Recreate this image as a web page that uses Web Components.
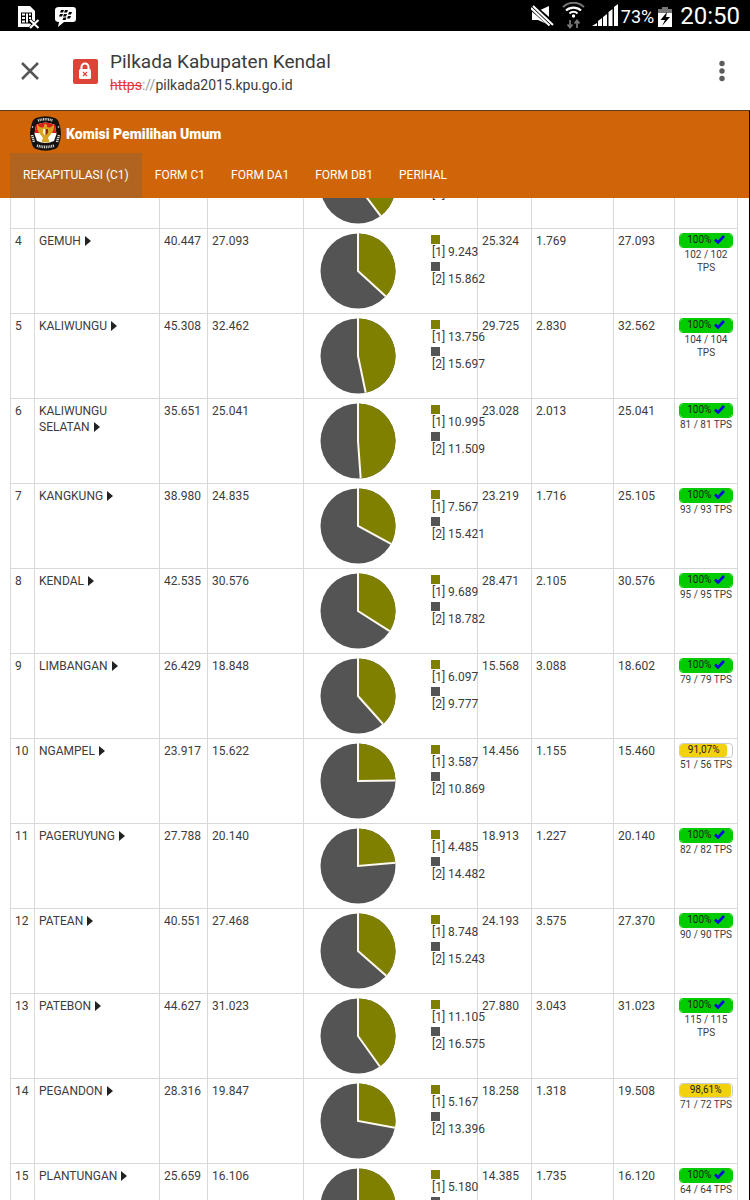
<!DOCTYPE html>
<html lang="id">
<head>
<meta charset="utf-8">
<meta name="viewport" content="width=device-width, initial-scale=1">
<title>Pilkada Kabupaten Kendal</title>
<style>
  html, body { height: 100%; margin: 0; }
  body { font-family: Roboto, "Liberation Sans", sans-serif; background: #fff; color: #3c3c3c; overflow: hidden; }
</style>
</head>
<body>
<phone-screen>
  <status-bar slot="status" battery="73%" time="20:50"></status-bar>
  <browser-bar slot="chrome" page-title="Pilkada Kabupaten Kendal" scheme="https" host="pilkada2015.kpu.go.id"></browser-bar>
  <site-header slot="header">
    <span slot="brand">Komisi Pemilihan Umum</span>
    <nav-tab active>REKAPITULASI (C1)</nav-tab>
    <nav-tab>FORM C1</nav-tab>
    <nav-tab>FORM DA1</nav-tab>
    <nav-tab>FORM DB1</nav-tab>
    <nav-tab>PERIHAL</nav-tab>
  </site-header>
  <recap-table></recap-table>
</phone-screen>

<script>
const attach = (el, html) => { el.attachShadow({ mode: 'open' }).innerHTML = html; };

customElements.define('phone-screen', class extends HTMLElement {
  constructor() {
    super();
    attach(this, `
      <style>
        :host { display: flex; flex-direction: column; height: 100vh; overflow: hidden; }
        .page { flex: 1; min-height: 0; display: flex; flex-direction: column; overflow: hidden;
                border-right: 1px solid #000; }
        .top { flex: none; }
        main { flex: 1; min-height: 0; overflow: hidden; }
      </style>
      <slot name="status"></slot>
      <slot name="chrome"></slot>
      <div class="page">
        <div class="top"><slot name="header"></slot></div>
        <main><slot></slot></main>
      </div>`);
  }
});

customElements.define('status-bar', class extends HTMLElement {
  constructor() {
    super();
    attach(this, `
      <style>
        :host { display: flex; align-items: center; height: 31px; padding: 2px 10px 0 16px; background: #000; color: #fff; box-sizing: border-box; flex: none; }
        svg { display: block; }
        .left { display: flex; gap: 15px; flex: 1; }
        .right { display: flex; align-items: center; }
        .pct { font-size: 18px; line-height: 29px; margin: 0 4px 0 3px; }
        .time { font-size: 24px; line-height: 29px; margin-left: 8px; }
      </style>
      <div class="left">
        <svg width="24" height="24" viewBox="0 0 24 24">
          <path d="M2 1h12l5 5v11l-3 5H2z" fill="#fff"/>
          <path d="M5 7.500h11v11H5z" fill="#000"/>
          <path d="M6 8.500h3v2H6zM6 12h3v2H6zM6 15.500h3v2H6zM10 8.500h2v9h-2zM13 8.500h2v2h-2zM13 12h2v2h-2z" fill="#fff"/>
          <path d="M14 15.500l8.500 8.500M22.500 15.500L14 24" stroke="#000" stroke-width="4.500"/>
          <path d="M14 15l8.500 8M22.500 15L14 23" stroke="#fff" stroke-width="2"/>
        </svg>
        <svg width="22" height="24" viewBox="0 0 22 24">
          <path d="M4 2h14q3 0 3 3v9q0 3-3 3H9l-6 5 1-5q-4 0-4-3V5q0-3 4-3z" fill="#fff"/>
          <path d="M6 5h3l-1 2.500H5zM10 5h3l-1 2.500H9zM5 9h3l-1 2.500H4zM9 9h3l-1 2.500H8zM14 7h3l-1 2.500h-3zM13 11h3l-1 2.500h-3zM8.500 12.500h3l-1 2.500h-3z" fill="#000"/>
        </svg>
      </div>
      <div class="right">
        <svg width="87" height="29" viewBox="0 2 87 29">
          <path d="M1 11h6L18 6v19L7 20H1z" fill="#fff"/>
          <path d="M0 6l23 20" stroke="#000" stroke-width="7"/>
          <path d="M0 8l18.500 17.500M2 6l20 19" stroke="#fff" stroke-width="2"/>
          <g fill="none" stroke-width="2">
            <path d="M32 7a15 15 0 0 1 21 0" stroke="#777"/>
            <path d="M35 10.500a11 11 0 0 1 15 0M38.500 13.500a6 6 0 0 1 8 0" stroke="#fff" stroke-width="2.200"/>
          </g>
          <circle cx="42.500" cy="16" r="1.700" fill="#fff"/>
          <path d="M39 20v7M36.500 24.500L39 27.500l2.500-3M46 28v-7M43.500 23.500L46 20.500l2.500 3" stroke="#777" stroke-width="1.800" fill="none"/>
          <path d="M61 26l5-3v3zM67 26v-5l4-3v8zM72 26v-9l4-3v12zM77.500 26V12l4-3v17zM83 26V7l4-3v22z" fill="#fff"/>
        </svg>
        <span class="pct"></span>
        <svg width="14" height="20" viewBox="0 0 14 20">
          <path d="M4 0h6v2h4v7H0V2h4z" fill="#777"/><path d="M0 6h14v14H0z" fill="#fff"/>
          <path d="M9 5L2.500 13H7l-3 6 8-9H8z" fill="#000"/>
        </svg>
        <span class="time"></span>
      </div>`);
    this.shadowRoot.querySelector('.pct').textContent = this.getAttribute('battery');
    this.shadowRoot.querySelector('.time').textContent = this.getAttribute('time');
  }
});

customElements.define('browser-bar', class extends HTMLElement {
  constructor() {
    super();
    attach(this, `
      <style>
        :host { display: flex; align-items: center; height: 80px; padding: 1px 16px 0 20px; box-sizing: border-box; background: #fff; border-bottom: 1px solid #5a3a1c; flex: none; }
        button { border: 0; padding: 0; background: none; display: block; }
        svg { display: block; }
        .lock { margin: 0 12px 0 33px; }
        .text { flex: 1; display: flex; flex-direction: column; padding-top: 3px; }
        .title { font-size: 19px; line-height: 24px; }
        .url { font-size: 14px; line-height: 22px; }
        s { color: #e53935; } i { font-style: normal; color: #999; }
      </style>
      <button aria-label="Tutup"><svg width="20" height="20" viewBox="0 0 20 20"><path d="M2 2l16 16M18 2L2 18" stroke="#555" stroke-width="2.500"/></svg></button>
      <svg class="lock" width="25" height="25" viewBox="0 0 25 25">
        <rect width="25" height="25" rx="2" fill="#db4437"/>
        <rect x="6" y="10" width="12" height="10" rx="1.500" fill="#fff"/>
        <path d="M8.500 11V8a3.500 3.500 0 0 1 7 0v3" fill="none" stroke="#fff" stroke-width="2"/>
        <path d="M10 13l4 4M14 13l-4 4" stroke="#db4437" stroke-width="1.200"/>
      </svg>
      <div class="text"><span class="title"></span><span class="url"><s></s><i>://</i><span class="host"></span></span></div>
      <button aria-label="Menu"><svg width="24" height="24" viewBox="0 0 24 24" fill="#5c5c5c"><circle cx="12" cy="4.500" r="2.700"/><circle cx="12" cy="12" r="2.700"/><circle cx="12" cy="19.500" r="2.700"/></svg></button>`);
    const $ = q => this.shadowRoot.querySelector(q);
    $('.title').textContent = this.getAttribute('page-title');
    $('s').textContent = this.getAttribute('scheme');
    $('.host').textContent = this.getAttribute('host');
  }
});

customElements.define('site-header', class extends HTMLElement {
  constructor() {
    super();
    attach(this, `
      <style>
        :host { display: block; background: #cf6508; color: #fff; }
        .brand { display: flex; align-items: center; gap: 4px; height: 42px; box-sizing: border-box; padding: 3px 0 0 29px; font-size: 14px; font-weight: 900; }
        nav { display: flex; padding-left: 10px; }
      </style>
      <div class="brand">
        <svg width="33" height="35" viewBox="0 0 33 35" aria-hidden="true">
          <path d="M7 2Q16.500-1.500 26 2q3 1 4 5 4 10.500 0 21-1 4-4 5-9.500 3.500-19 0-3-1-4-5-4-10.500 0-21 1-4 4-5z" fill="#15110f"/>
          <path d="M7 9Q16.500 4 26 9L27.500 18 25 25Q16.500 29 8 25L5.500 18z" fill="#fff"/>
          <path d="M7 9Q16.500 4 26 9l1.300 8H5.700z" fill="#d9201a"/>
          <path d="M16.500 8q2 0 1.500 3 4 2 7-3 .5 6-3 10-2 2-3 4l1.500 3.500q-4 2-8 0L14 22q-1-2-3-4-3.500-4-3-10 3 5 7 3-.5-3 1.500-3z" fill="#d9a520"/>
          <path d="M14 13h5v4l-2.500 3-2.500-3z" fill="#fff3c4"/><path d="M16.500 13h2.500v4l-2.500 3z" fill="#8c2a12"/>
          <g fill="none" stroke="#ddd">
            <path d="M9 4.500Q16.500 2 24 4.500" stroke-dasharray="1 .7" stroke-width="2.500"/>
            <path d="M3 19l2 7M28 26l2-7" stroke-dasharray="1.200 .8" stroke-width="2.500"/>
            <path d="M8 29.500q8.500 3 17 0" stroke-dasharray="1 .8" stroke-width="2.800"/>
          </g>
          <circle cx="3.500" cy="11" r=".8" fill="#fff"/><circle cx="29.500" cy="11" r=".8" fill="#fff"/>
        </svg>
        <slot name="brand"></slot>
      </div>
      <nav><slot></slot></nav>`);
  }
});

customElements.define('nav-tab', class extends HTMLElement {
  constructor() {
    super();
    attach(this, `
      <style>
        :host { display: block; }
        a { display: block; padding: 0 13px; font-size: 12px; line-height: 45px; color: #fff; text-decoration: none; white-space: nowrap; }
        :host([active]) a { background: #b16420; }
      </style>
      <a href="#"><slot></slot></a>`);
  }
});

/* Two-slice pie: share is the first candidate's part, clockwise from twelve o'clock. */
customElements.define('vote-pie', class extends HTMLElement {
  connectedCallback() {
    if (this.shadowRoot) return;
    const share = Number(this.getAttribute('share'));
    const angle = share * 2 * Math.PI;
    const x = 38 + 37.5 * Math.sin(angle), y = 38 - 37.5 * Math.cos(angle);
    attach(this, `
      <style>:host { display: block; flex: none; } svg { display: block; }</style>
      <svg width="76" height="76" viewBox="0 0 76 76" aria-hidden="true">
        <circle cx="38" cy="38" r="37.500" fill="#545454"/>
        <path d="M38 38V.5A37.500 37.500 0 0 1 ${x} ${y}z" fill="#808000"/>
        <path d="M38 0V38L${x} ${y}" fill="none" stroke="#fffaf0" stroke-width="2"/>
      </svg>`);
  }
});

customElements.define('vote-legend', class extends HTMLElement {
  connectedCallback() {
    if (this.shadowRoot) return;
    attach(this, `
      <style>
        :host { display: flex; flex-direction: column; gap: 2px; padding-top: 2px; white-space: nowrap; line-height: 16px; }
        .key { width: 9px; height: 9px; background: #808000; }
        .key.b { background: #545454; }
        .val { display: block; padding-left: 1px; }
        .item { height: 25px; }
      </style>
      <div class="item"><div class="key"></div><span class="val" id="a"></span></div>
      <div class="item"><div class="key b"></div><span class="val" id="b"></span></div>`);
    this.shadowRoot.getElementById('a').textContent = this.getAttribute('first');
    this.shadowRoot.getElementById('b').textContent = this.getAttribute('second');
  }
});

customElements.define('tps-progress', class extends HTMLElement {
  connectedCallback() {
    if (this.shadowRoot) return;
    const pct = this.getAttribute('pct');
    const full = pct === '100';
    attach(this, `
      <style>
        :host { display: block; text-align: center; font-size: 10px; line-height: 13px; }
        .bar { height: 15px; box-sizing: border-box; border: 1px solid #ccc; border-radius: 4px; overflow: hidden; background: #fff; color: #222; }
        .fill { height: 13px; line-height: 12px; border-radius: 3px; background: #f2d20c; white-space: nowrap; }
        .full { border-color: #00cc00; } .full .fill { background: #00cc00; }
        svg { vertical-align: -1px; }
      </style>
      <div class="bar ${full ? 'full' : ''}"><div class="fill" style="width:${pct.replace(',', '.')}%">${pct}%${full ? ' <svg width="11" height="9" viewBox="0 0 11 9"><path d="M1 4.500l3 3L10 1" fill="none" stroke="#0a0ae0" stroke-width="2.600"/></svg>' : ''}</div></div>
      <slot></slot>`);
  }
});

customElements.define('recap-table', class extends HTMLElement {
  constructor() {
    super();
    const rows = [
      [4, 'GEMUH', '40.447', '27.093', '9.243', '15.862', '25.324', '1.769', '27.093', '100', '102 / 102'],
      [5, 'KALIWUNGU', '45.308', '32.462', '13.756', '15.697', '29.725', '2.830', '32.562', '100', '104 / 104'],
      [6, 'KALIWUNGU SELATAN', '35.651', '25.041', '10.995', '11.509', '23.028', '2.013', '25.041', '100', '81 / 81'],
      [7, 'KANGKUNG', '38.980', '24.835', '7.567', '15.421', '23.219', '1.716', '25.105', '100', '93 / 93'],
      [8, 'KENDAL', '42.535', '30.576', '9.689', '18.782', '28.471', '2.105', '30.576', '100', '95 / 95'],
      [9, 'LIMBANGAN', '26.429', '18.848', '6.097', '9.777', '15.568', '3.088', '18.602', '100', '79 / 79'],
      [10, 'NGAMPEL', '23.917', '15.622', '3.587', '10.869', '14.456', '1.155', '15.460', '91,07', '51 / 56'],
      [11, 'PAGERUYUNG', '27.788', '20.140', '4.485', '14.482', '18.913', '1.227', '20.140', '100', '82 / 82'],
      [12, 'PATEAN', '40.551', '27.468', '8.748', '15.243', '24.193', '3.575', '27.370', '100', '90 / 90'],
      [13, 'PATEBON', '44.627', '31.023', '11.105', '16.575', '27.880', '3.043', '31.023', '100', '115 / 115'],
      [14, 'PEGANDON', '28.316', '19.847', '5.167', '13.396', '18.258', '1.318', '19.508', '98,61', '71 / 72'],
      [15, 'PLANTUNGAN', '25.659', '16.106', '5.180', '', '14.385', '1.735', '16.120', '100', '64 / 64']
    ];
    const num = s => Number(s.replace('.', ''));
    /* Without a second figure, the rest of the valid votes is the second slice. */
    const share = (a, b, valid) => num(a) / (b ? num(a) + num(b) : num(valid));
    const votes = (part, a, b) =>
      `<div class="votes"><vote-pie share="${part}"></vote-pie><vote-legend first="${a}" second="${b}"></vote-legend></div>`;
    const name = s => {
      const words = s.split(' '), last = words.pop();
      return `${words.join(' ')} <span class="last">${last}<svg width="6" height="10" viewBox="0 0 6 10"><path d="M0 0l6 5L0 10z" fill="#222"/></svg></span>`;
    };
    const body = rows.map(([no, district, voters, users, a, b, valid, invalid, total, pct, tps]) => `
      <tr><td>${no}</td><td>${name(district)}</td><td>${voters}</td><td>${users}</td>
      <td>${votes(share(a, b, valid), '[1] ' + a, b && '[2] ' + b)}</td>
      <td>${valid}</td><td>${invalid}</td><td>${total}</td>
      <td><tps-progress pct="${pct}">${tps} TPS</tps-progress></td></tr>`).join('');
    attach(this, `
      <style>
        /* The list is scrolled so that the first row is partly under the header. */
        :host { display: block; margin: -55px 11px 0 10px; }
        table { width: 100%; table-layout: fixed; border-collapse: collapse; font-size: 12px; line-height: 16px; }
        td { border: 1px solid #d9d9d9; padding: 4px; height: 76px; vertical-align: top; }
        .no { width: 24px; } .name { width: 125px; } .voters { width: 48px; } .users { width: 96px; }
        .valid { width: 54px; } .invalid { width: 82px; } .total { width: 61px; } .tps { width: 63px; }
        .votes { display: flex; gap: 35px; padding-left: 12px; }
        .last { white-space: nowrap; }
        .last svg { margin-left: 4px; vertical-align: -1px; }
      </style>
      <table>
        <colgroup><col class="no"><col class="name"><col class="voters"><col class="users"><col>
          <col class="valid"><col class="invalid"><col class="total"><col class="tps"></colgroup>
        <tbody>
          <tr><td></td><td></td><td></td><td></td><td>${votes(0.397, '', '[2]')}</td><td></td><td></td><td></td><td></td></tr>
          ${body}
        </tbody>
      </table>`);
  }
});
</script>
</body>
</html>
